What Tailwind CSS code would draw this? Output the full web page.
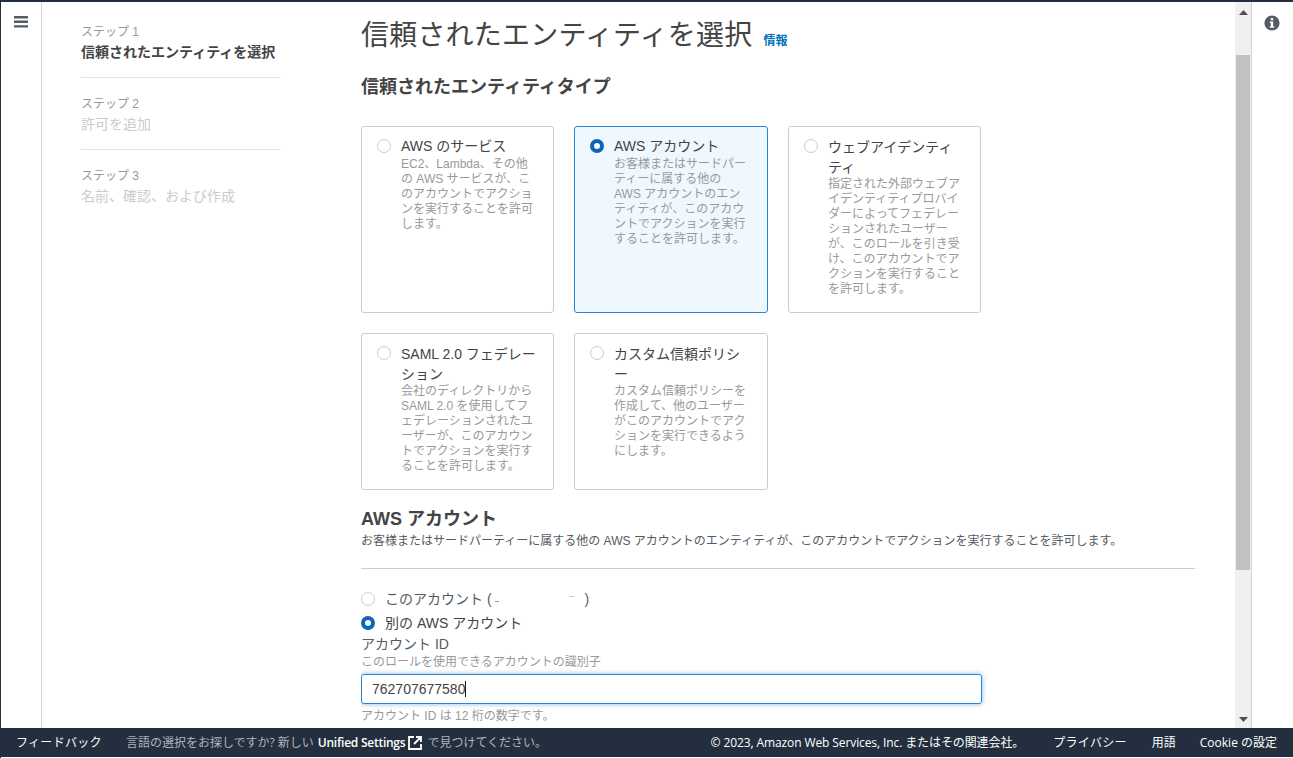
<!DOCTYPE html>
<html lang="ja">
<head>
  <meta charset="UTF-8">
  <title>信頼されたエンティティを選択</title>
  <meta name="viewport" content="width=device-width, initial-scale=1.0">
  <script src="https://cdn.jsdelivr.net/npm/@tailwindcss/browser@4"></script>
</head>
<body class="h-[758px] w-[1293px] overflow-hidden bg-white font-['Liberation_Sans','Noto_Sans_CJK_JP',sans-serif] text-[#444444]">
  <div class="flex h-[758px] flex-col border-t-2 border-l border-[#232f3e]">
    <div class="flex h-[726px] min-h-0">
      <!-- left rail -->
      <div class="flex w-[41px] shrink-0 justify-center border-r border-[#d5d5d5] pt-[14px]">
        <svg class="ml-[-1px]" width="14" height="12" viewBox="0 0 14 12"><path d="M0 0h14v2.400H0zM0 4.600h14v2.400H0zM0 9.200h14v2.400H0z" fill="#545b64"/></svg>
      </div>
      <!-- steps -->
      <nav class="w-[200px] shrink-0 ml-[39px] pt-[22px]">
        <div class="border-b border-[#e1e1e1] pb-[15px]">
          <p class="text-[12px] leading-[16px] text-[#999999]">ステップ 1</p>
          <p class="mt-[2px] text-[14px] leading-[20px] font-bold text-[#444444]">信頼されたエンティティを選択</p>
        </div>
        <div class="border-b border-[#e1e1e1] pt-[18px] pb-[15px]">
          <p class="text-[12px] leading-[16px] text-[#999999]">ステップ 2</p>
          <p class="mt-[2px] text-[14px] leading-[20px] text-[#cccccc]">許可を追加</p>
        </div>
        <div class="pt-[18px]">
          <p class="text-[12px] leading-[16px] text-[#999999]">ステップ 3</p>
          <p class="mt-[2px] text-[14px] leading-[20px] text-[#cccccc]">名前、確認、および作成</p>
        </div>
      </nav>
      <!-- main -->
      <main class="ml-[80px] w-[874px] shrink-0 overflow-hidden pt-[16px] pr-[40px]">
        <div class="flex items-baseline">
          <h1 class="text-[28px] leading-[36px] font-normal tracking-[0.2px] text-[#444444]">信頼されたエンティティを選択</h1>
          <a class="ml-[11px] text-[12px] font-bold text-[#0073bb]">情報</a>
        </div>
        <h2 class="mt-[21px] text-[18px] leading-[24px] font-bold text-[#444444]">信頼されたエンティティタイプ</h2>
        <div class="mt-[27px] grid w-[620px] grid-cols-[193px_194px_193px] grid-rows-[187px_157px] gap-x-[20px] gap-y-[20px]">
          <div class="flex rounded-[3px] border border-[#cccccc] pt-[12px] pl-[15px]">
            <span class="size-[14px] shrink-0 rounded-full border border-[#cccccc] bg-white"></span>
            <div class="ml-[10px]">
              <p class="text-[14px] leading-[14px] text-[#444444]">AWS のサービス</p>
              <p class="mt-[4px] text-[12px] leading-[15px] text-[#999999]">EC2、Lambda、その他<br>の AWS サービスが、こ<br>のアカウントでアクショ<br>ンを実行することを許可<br>します。</p>
            </div>
          </div>
          <div class="flex rounded-[3px] border border-[#2a83d6] bg-[#f0f8ff] pt-[12px] pl-[15px]">
            <span class="size-[14px] shrink-0 rounded-full border-[4px] border-[#0a66b8] bg-white"></span>
            <div class="ml-[10px]">
              <p class="text-[14px] leading-[14px] text-[#444444]">AWS アカウント</p>
              <p class="mt-[4px] text-[12px] leading-[15px] text-[#999999]">お客様またはサードパー<br>ティーに属する他の<br>AWS アカウントのエン<br>ティティが、このアカウ<br>ントでアクションを実行<br>することを許可します。</p>
            </div>
          </div>
          <div class="flex rounded-[3px] border border-[#cccccc] pt-[12px] pl-[15px]">
            <span class="size-[14px] shrink-0 rounded-full border border-[#cccccc] bg-white"></span>
            <div class="ml-[10px]">
              <p class="-mt-[2px] text-[14px] leading-[20px] text-[#444444]">ウェブアイデンティ<br>ティ</p>
              <p class="mt-[0px] text-[12px] leading-[15px] text-[#999999]">指定された外部ウェブア<br>イデンティティプロバイ<br>ダーによってフェデレー<br>ションされたユーザー<br>が、このロールを引き受<br>け、このアカウントでア<br>クションを実行すること<br>を許可します。</p>
            </div>
          </div>
          <div class="flex rounded-[3px] border border-[#cccccc] pt-[12px] pl-[15px]">
            <span class="size-[14px] shrink-0 rounded-full border border-[#cccccc] bg-white"></span>
            <div class="ml-[10px]">
              <p class="-mt-[2px] text-[14px] leading-[20px] text-[#444444]">SAML 2.0 フェデレー<br>ション</p>
              <p class="mt-[0px] text-[12px] leading-[15px] text-[#999999]">会社のディレクトリから<br>SAML 2.0 を使用してフ<br>ェデレーションされたユ<br>ーザーが、このアカウン<br>トでアクションを実行す<br>ることを許可します。</p>
            </div>
          </div>
          <div class="flex rounded-[3px] border border-[#cccccc] pt-[12px] pl-[15px]">
            <span class="size-[14px] shrink-0 rounded-full border border-[#cccccc] bg-white"></span>
            <div class="ml-[10px]">
              <p class="-mt-[2px] text-[14px] leading-[20px] text-[#444444]">カスタム信頼ポリシ<br>ー</p>
              <p class="mt-[0px] text-[12px] leading-[15px] text-[#999999]">カスタム信頼ポリシーを<br>作成して、他のユーザー<br>がこのアカウントでアク<br>ションを実行できるよう<br>にします。</p>
            </div>
          </div>
        </div>
        <h2 class="mt-[17px] text-[18px] leading-[24px] font-bold text-[#444444]">AWS アカウント</h2>
        <p class="mt-[1px] text-[12px] leading-[18px] text-[#545b64]">お客様またはサードパーティーに属する他の AWS アカウントのエンティティが、このアカウントでアクションを実行することを許可します。</p>
        <div class="mt-[18px] border-t border-[#cccccc]"></div>
        <div class="mt-[20px] flex h-[20px] items-center">
          <span class="size-[14px] shrink-0 rounded-full border border-[#cccccc] bg-white"></span>
          <span class="ml-[10px] flex items-center text-[14px] leading-[20px] text-[#545b64]">このアカウント (<span class="ml-[3px] mt-[5px] h-px w-[4px] bg-[#999999]"></span><span class="ml-[70px] mb-[6px] h-px w-[5px] bg-[#cccccc]"></span><span class="ml-[11px]">)</span></span>
        </div>
        <div class="mt-[4px] flex h-[20px] items-center">
          <span class="size-[14px] shrink-0 rounded-full border-[4px] border-[#0a66b8] bg-white"></span>
          <span class="ml-[10px] text-[14px] leading-[20px] text-[#444444]">別の AWS アカウント</span>
        </div>
        <p class="mt-[1px] text-[14px] leading-[20px] text-[#545b64]">アカウント ID</p>
        <p class="text-[12px] leading-[16px] text-[#999999]">このロールを使用できるアカウントの識別子</p>
        <div class="mt-[4px] flex h-[30px] w-[621px] items-center rounded-[3px] border border-[#2a83d6] pl-[10px] text-[14px] text-[#444444] shadow-[0_0_4px_1px_rgba(0,115,187,0.35)]">762707677580<span class="h-[16px] w-px bg-[#16191f]"></span></div>
        <p class="mt-[4px] text-[12px] leading-[16px] text-[#999999]">アカウント ID は 12 桁の数字です。</p>
      </main>
      <!-- scrollbar -->
      <div class="flex w-[16px] shrink-0 flex-col items-center bg-[#f0f0f0]">
        <svg class="mt-[8px]" width="9" height="5" viewBox="0 0 9 5"><path d="M4.500 0 9 5H0z" fill="#505050"/></svg>
        <div class="mt-[40px] h-[515px] w-[14px] bg-[#c1c1c1]"></div>
        <svg class="mt-auto mb-[6px]" width="9" height="5" viewBox="0 0 9 5"><path d="M0 0h9L4.500 5z" fill="#505050"/></svg>
      </div>
      <!-- right rail -->
      <div class="flex flex-1 justify-center border-l border-[#d5d5d5] pt-[13px] pr-[1px]">
        <svg width="16" height="16" viewBox="0 0 16 16"><circle cx="8" cy="8" r="7.600" fill="#545b64"/><path d="M6.800 3h2.400v2.200H6.800zM5.800 6.500h3.400v4.700h1v1.500H5.800v-1.500h1V8H5.800z" fill="#fff"/></svg>
      </div>
    </div>
    <!-- footer -->
    <footer class="flex h-[29px] shrink-0 items-center bg-[#232f3e] pl-[15px] pr-[16px] font-['Open_Sans','Noto_Sans_CJK_JP',sans-serif] text-[12px] text-[#d5dbdb]">
      <span class="tracking-[0.3px] text-white">フィードバック</span>
      <span class="ml-[24px] text-[#aab7b8]">言語の選択をお探しですか? 新しい</span>
      <span class="ml-[4px] font-semibold tracking-[-0.25px] text-white">Unified Settings</span>
      <svg class="ml-[3px]" width="14" height="14" viewBox="0 0 14 14" fill="none" stroke="#fff" stroke-width="1.800"><path d="M6 1H1v12h12V8M8 1h5v5M13 1 6 8"/></svg>
      <span class="ml-[5px] text-[#aab7b8]">で見つけてください。</span>
      <span class="ml-auto tracking-[-0.1px] text-white">© 2023, Amazon Web Services, Inc. またはその関連会社。</span>
      <span class="ml-[29px] tracking-[0.3px] text-white">プライバシー</span>
      <span class="ml-[25px] text-white">用語</span>
      <span class="ml-[24px] text-white">Cookie の設定</span>
    </footer>
  </div>
</body>
</html>
